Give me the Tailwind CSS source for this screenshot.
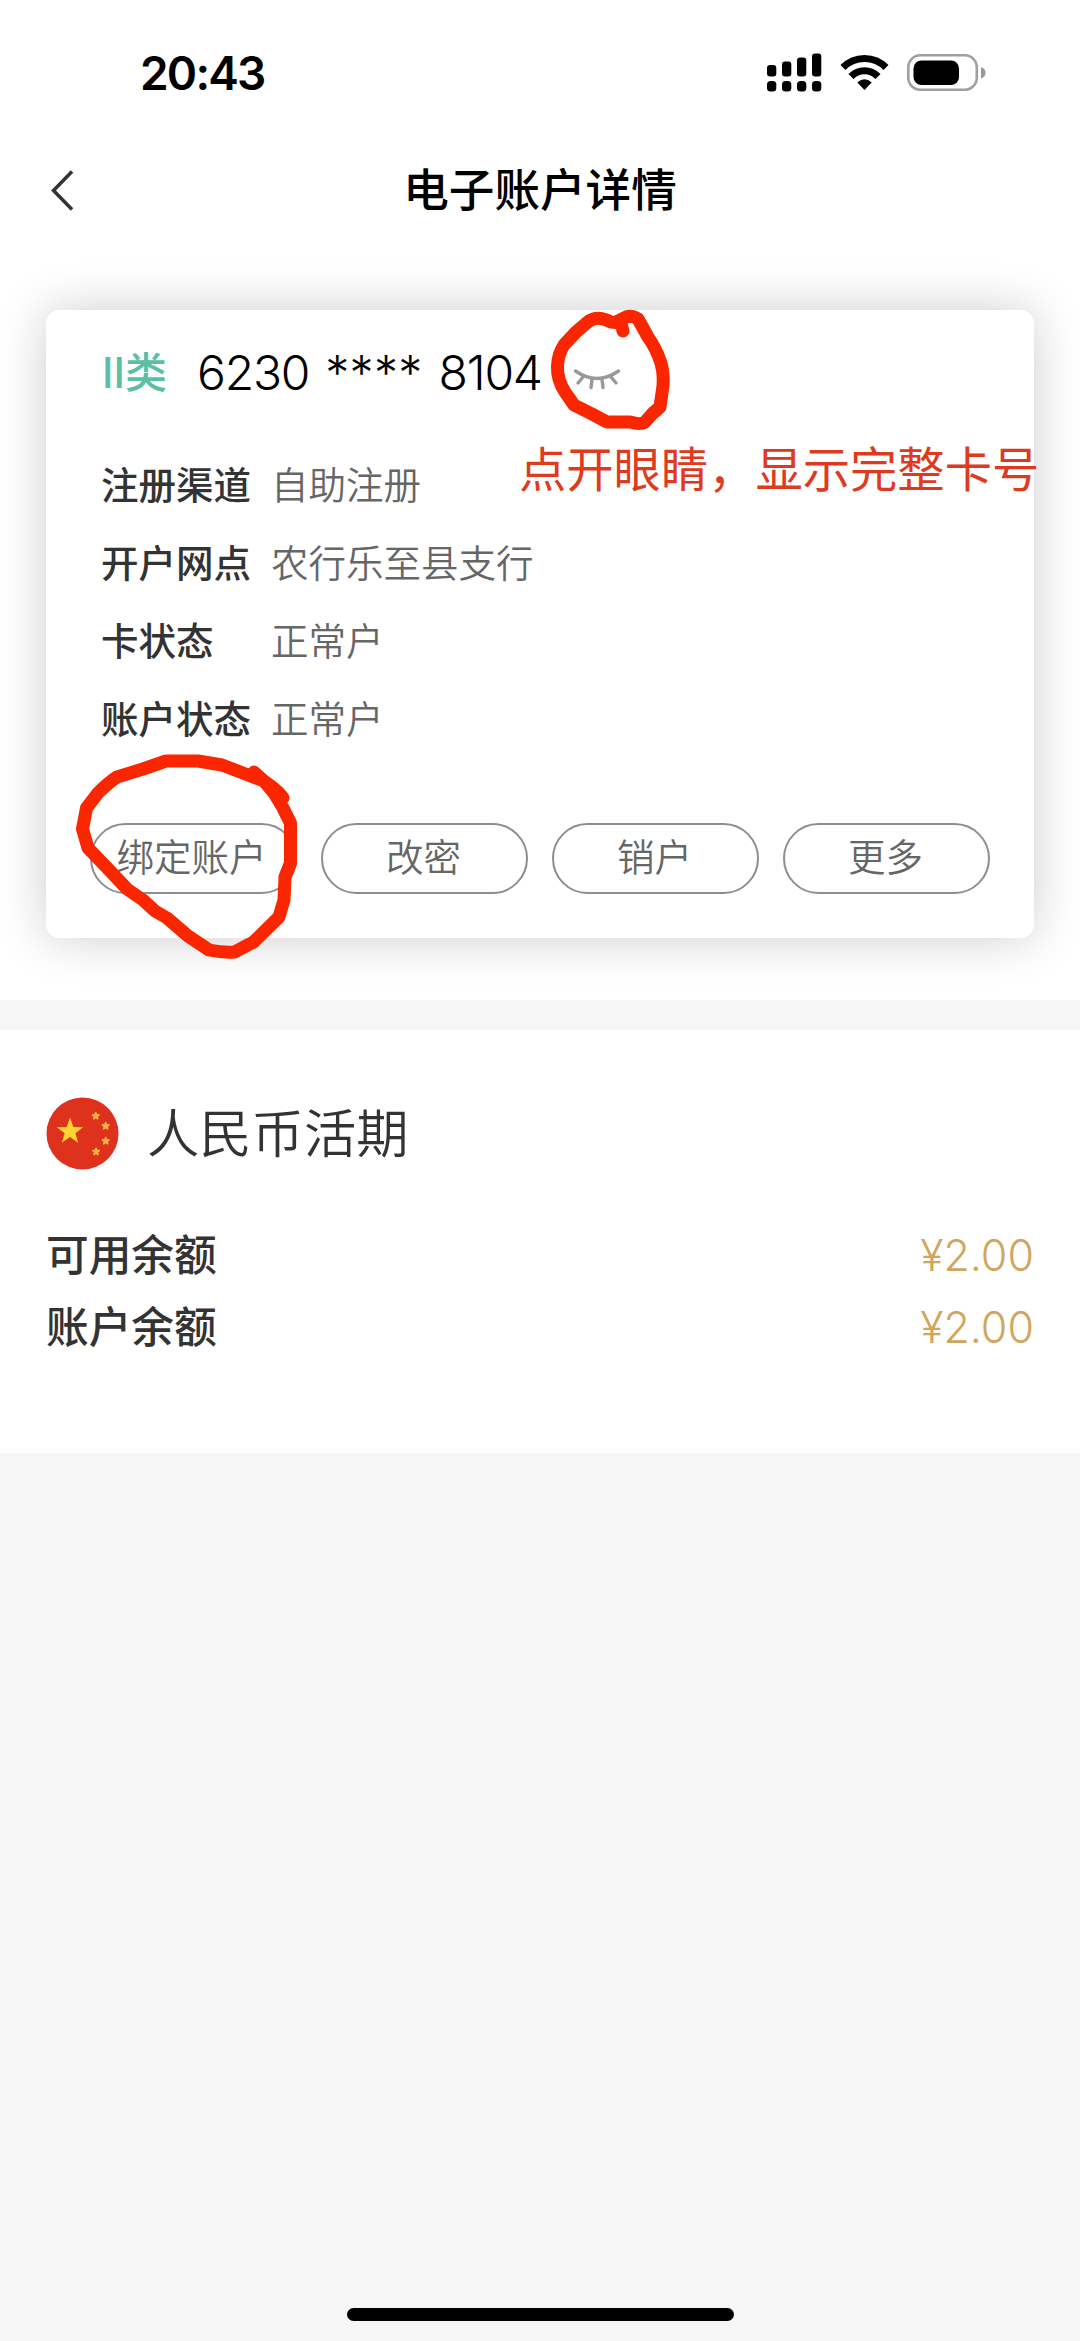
<!DOCTYPE html>
<html lang="zh-CN">
<head>
<meta charset="utf-8">
<title>电子账户详情</title>
<script src="https://cdn.jsdelivr.net/npm/@tailwindcss/browser@4"></script>
</head>
<body class="bg-[#f6f6f6]">
<div class="relative flex h-[2341px] w-[1080px] flex-col overflow-hidden bg-[#f6f6f6] font-['Inter','Noto_Sans_CJK_SC',sans-serif] text-[#333]">
  <div class="flex h-[1000px] flex-col bg-white">
    <!-- status bar -->
    <header class="flex h-[146px] items-center justify-between pr-[93px] pl-[140px]">
      <div class="text-[46px] leading-none font-semibold tracking-[-1.8px] text-black">20:43</div>
      <div class="flex items-center">
        <svg class="h-[40px] w-[56px]" viewBox="0 0 56 40">
          <g fill="#000"><rect x="1" y="12" width="9.300" height="11.500" rx="3"/><rect x="16" y="8.500" width="9.300" height="15" rx="3"/><rect x="31" y="4.500" width="9.300" height="19" rx="3"/><rect x="46" y=".5" width="9.300" height="23" rx="3"/><rect x="1" y="28" width="9.300" height="10.500" rx="3.500"/><rect x="16" y="28" width="9.300" height="10.500" rx="3.500"/><rect x="31" y="28" width="9.300" height="10.500" rx="3.500"/><rect x="46" y="28" width="9.300" height="10.500" rx="3.500"/></g>
        </svg>
        <svg class="mb-[2px] ml-[18px] h-[36px] w-[49px]" viewBox="0 0 49 36">
          <g fill="none" stroke="#000" stroke-width="7"><path d="M3 13.500A30 30 0 0 1 46 13.500"/><path d="M11 22.500A18.500 18.500 0 0 1 38 22.500"/></g>
          <path d="M24.500 36L17.300 28.600Q24.500 22 31.700 28.600Z" fill="#000"/>
        </svg>
        <svg class="mb-[2px] ml-[18px] h-[38px] w-[80px]" viewBox="0 0 80 38">
          <rect x="1.300" y="2.300" width="68.500" height="34.500" rx="12" fill="none" stroke="#a0a0a0" stroke-width="2.600"/>
          <rect x="6.500" y="7.500" width="45.500" height="24.500" rx="8" fill="#000"/>
          <path d="M74 14Q78.500 15.500 78.500 19.800T74 25.500Z" fill="#999"/>
        </svg>
      </div>
    </header>
    <!-- navigation -->
    <nav class="relative flex h-[88px] items-center justify-center pt-[2px]">
      <svg class="absolute top-[22px] left-[49px] h-[44px] w-[26px]" viewBox="0 0 26 44"><path d="M23 3.500L4.500 22.500L23 41.500" fill="none" stroke="#333" stroke-width="3.500"/></svg>
      <h1 class="text-[45.6px] leading-none font-medium text-black">电子账户详情</h1>
    </nav>
    <!-- account card -->
    <section class="mx-[46px] mt-[76px] flex h-[628px] flex-col rounded-[14px] bg-white pt-[33px] shadow-[0_0_50px_rgba(0,0,0,0.2)]">
      <div class="flex h-[60px] items-center pl-[55px] leading-none">
        <span class="w-[96px] pl-[1px] text-[42px] font-medium text-[#5bbfa6]">II类</span>
        <span class="flex w-[376px] gap-[16px] text-[48px] font-[360] text-black"><span class="tracking-[-1.2px]">6230</span><span class="tracking-[0.3px]">****</span><span class="tracking-[-1.2px]">8104</span></span>
        <svg class="mt-[11px] h-[26px] w-[50px]" viewBox="0 0 50 26"><g fill="none" stroke="#999" stroke-width="3.400" stroke-linecap="round"><path d="M2.500 5Q24 20 45.500 5"/><path d="M10 11L5 17M19 13.500L18 21.500M29 13.500L30 21.500M38 11L43 17"/></g></svg>
      </div>
      <dl class="mt-[44px] grid grid-cols-[170px_1fr] pl-[55px] text-[37.5px] leading-[78px]">
        <dt class="font-medium">注册渠道</dt><dd class="font-[350] text-[#666]">自助注册</dd>
        <dt class="font-medium">开户网点</dt><dd class="font-[350] text-[#666]">农行乐至县支行</dd>
        <dt class="font-medium">卡状态</dt><dd class="font-[350] text-[#666]">正常户</dd>
        <dt class="font-medium">账户状态</dt><dd class="font-[350] text-[#666]">正常户</dd>
      </dl>
      <div class="mt-[64px] grid grid-cols-4 gap-[24px] pr-[44px] pl-[44px] text-[37.5px] font-[350] text-[#666]">
        <button class="flex h-[71px] items-center justify-center rounded-full border-2 border-[#8e8e8e] pr-[4px] pb-[2px] leading-none whitespace-nowrap">绑定账户</button>
        <button class="flex h-[71px] items-center justify-center rounded-full border-2 border-[#8e8e8e] pr-[2px] pb-[2px] leading-none">改密</button>
        <button class="flex h-[71px] items-center justify-center rounded-full border-2 border-[#8e8e8e] pr-[2px] pb-[2px] leading-none">销户</button>
        <button class="flex h-[71px] items-center justify-center rounded-full border-2 border-[#8e8e8e] pr-[2px] pb-[2px] leading-none">更多</button>
      </div>
    </section>
  </div>
  <!-- balances -->
  <section class="mt-[30px] flex h-[423px] flex-col bg-white px-[46px] pt-[67px]">
    <div class="flex h-[73px] items-center gap-[28px]">
      <svg class="size-[73px]" viewBox="0 0 73 73">
        <defs><path id="star" d="M0-1L.235-.324L.951-.309L.38.124L.588.809L0 .4L-.588.809L-.38.124L-.951-.309L-.235-.324Z"/></defs>
        <circle cx="36.500" cy="36.500" r="36" fill="#df321c"/>
        <use href="#star" transform="translate(24 34.500) scale(14)" fill="#fdd52e"/>
        <g fill="#f9b044" stroke="#f9b044" stroke-width=".5" stroke-linejoin="round"><use href="#star" transform="translate(49.700 19) scale(3.400)"/><use href="#star" transform="translate(59.700 29) scale(3.400)"/><use href="#star" transform="translate(59.700 44) scale(3.400)"/><use href="#star" transform="translate(50 54.700) scale(3.400)"/></g>
      </svg>
      <h2 class="pt-[2px] text-[52.3px] leading-none font-[350]">人民币活期</h2>
    </div>
    <div class="mt-[49px] flex h-[72px] items-center justify-between"><span class="pt-[2px] text-[42.7px] leading-none font-medium">可用余额</span><span class="text-[43px] leading-none font-light text-[#d0a55c]">¥2.00</span></div>
    <div class="flex h-[72px] items-center justify-between"><span class="pt-[2px] text-[42.7px] leading-none font-medium">账户余额</span><span class="text-[43px] leading-none font-light text-[#d0a55c]">¥2.00</span></div>
  </section>
  <!-- home indicator -->
  <div class="mx-auto mt-auto mb-[20px] h-[13px] w-[387px] rounded-full bg-black"></div>

  <!-- hand-drawn annotations -->
  <p class="absolute top-[446px] left-[519px] text-[47.3px] leading-[47px] whitespace-nowrap text-[#e03a1e]">点开眼睛，显示完整卡号</p>
  <svg class="absolute top-0 left-0 h-[1000px] w-[1080px]" viewBox="0 0 1080 1000">
    <g fill="none" stroke="#fa2600" stroke-width="13" stroke-linecap="round" stroke-linejoin="round">
      <path d="M623 331L621 323L611 322Q598 315 589 321L576 332L564 345Q558 354 557.500 366Q557 380 565 392L574 405L592 414L607 422H630Q641 425 645 422L652 414L660 407L662 393Q665 378 661 363Q656 348 648 337L638 319Q632 315 626 317L618 321"/>
      <path d="M283 798Q280 792 264 781L243 773L222 765L198 761H166L143 769L117 777Q108 783 98 793L86.500 808L82.500 829L88 848L112 873L127 889L143 900L155 911L167 918L188 936L209 950Q224 953 234.500 952L253.500 942L279 917L284 900L285 877L290.500 863V823L283 808L274 793L264 781L254 772"/>
    </g>
  </svg>
</div>
</body>
</html>
